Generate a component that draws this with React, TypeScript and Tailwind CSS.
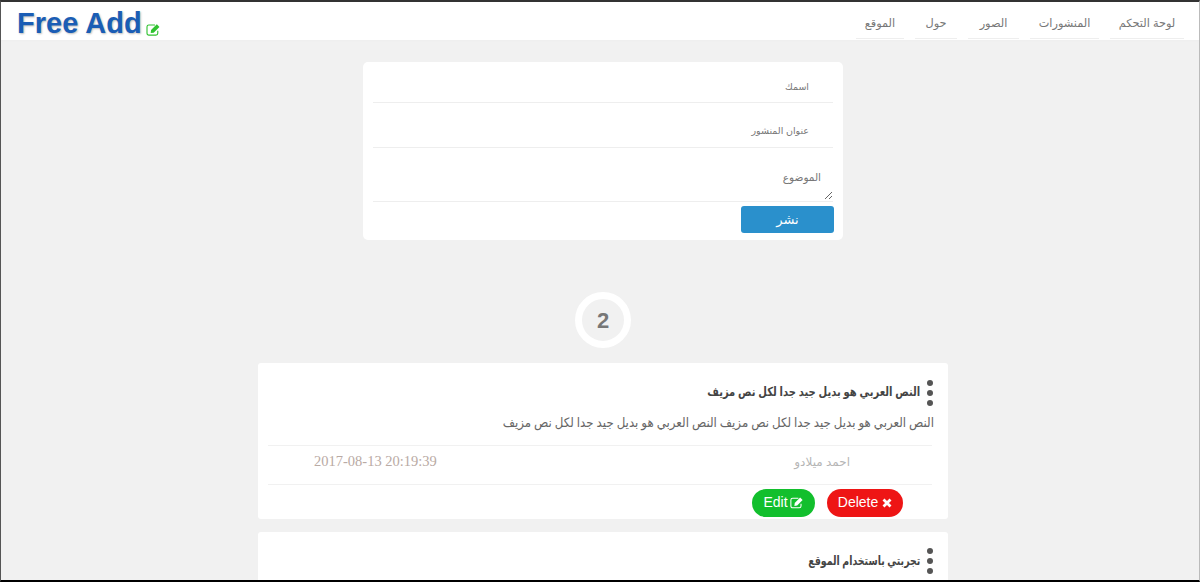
import React from "react";

const sans = "[font-family:'Liberation_Sans','DejaVu_Sans',sans-serif]";

function EditIcon({ className }: { className?: string }) {
  return (
    <svg viewBox="0 0 16 14" className={className} fill="none">
      <path d="M12.6 8.4V11C12.6 12.2 11.8 13 10.6 13H3C1.8 13 1 12.2 1 11V4C1 2.8 1.8 2.1 3 2.1H9.6" stroke="currentColor" strokeWidth="1.2" />
      <path d="M5.4 7.6L11.6 1.4L14.4 4.2L8.2 10.4L5 10.9Z" fill="currentColor" />
    </svg>
  );
}

function Kebab() {
  return (
    <div className="flex flex-col gap-[4px] w-[6px] -mr-px">
      <span className="w-[6px] h-[6px] rounded-full bg-[#555]" />
      <span className="w-[6px] h-[6px] rounded-full bg-[#555]" />
      <span className="w-[6px] h-[6px] rounded-full bg-[#555]" />
    </div>
  );
}

const links = [
  { label: "لوحة التحكم", width: "w-[74px]" },
  { label: "المنشورات", width: "w-[69px]" },
  { label: "الصور", width: "w-[51px]" },
  { label: "حول", width: "w-[42px]" },
  { label: "الموقع", width: "w-[48px]" },
];

export default function App() {
  return (
    <div className={`h-[582px] overflow-hidden bg-[#f1f1f1] border-t-2 border-l border-r border-b-2 border-t-[#333] border-l-[#555] border-r-[#bbb] border-b-black ${sans}`}>
      <header className="h-[38px] bg-white flex items-start justify-between pr-[15px] pl-[16px] shadow-[0_1px_2px_#eee]">
        <div className="flex items-start">
          <span className="pt-[2px] text-[29px] leading-[38px] font-bold text-[#1a5db5] [text-shadow:1px_1px_2px_#bbb]">Free Add</span>
          <EditIcon className="w-[15px] h-[13px] mt-[21px] ml-[4px] text-[#2fc22f]" />
        </div>
        <nav dir="rtl" className="flex gap-[11px] pt-[6px]">
          {links.map((l) => (
            <a key={l.label} className={`${l.width} h-[31px] text-center text-[11.3px] leading-[30px] text-[#777] border-b border-[#eee]`}>{l.label}</a>
          ))}
        </nav>
      </header>

      <main className="flex flex-col items-center pl-[6px]">
        <form dir="rtl" className="w-[480px] h-[178px] mt-[22px] bg-white rounded-[5px] px-[10px] flex flex-col">
          <div className="h-[41px] border-b border-[#eee] pr-[24px] pt-[17px] text-[9.5px] leading-[15px] text-[#777]">اسمك</div>
          <div className="h-[45px] border-b border-[#eee] pr-[24px] pt-[20px] text-[9.5px] leading-[15px] text-[#777]">عنوان المنشور</div>
          <div className="relative h-[54px] border-b border-[#eee] pr-[12px] pt-[22px] text-[10.5px] leading-[15px] text-[#777]">
            الموضوع
            <svg viewBox="0 0 9 9" className="absolute right-0 bottom-[1px] w-[9px] h-[9px] text-[#666]" fill="none" stroke="currentColor">
              <path d="M1 8L8 1M5 8L8 5" />
            </svg>
          </div>
          <button type="button" className="w-[93px] h-[27px] mt-[4px] -mr-px bg-[#2a90cc] rounded-[3px] text-white text-[13px]">نشر</button>
        </form>

        <div className="w-[56px] h-[56px] mt-[52px] rounded-full border-[7px] border-white flex items-center justify-center text-[22px] font-bold text-[#777]">2</div>

        <article className="w-[690px] h-[156px] mt-[15px] bg-white rounded-[3px] pl-[10px] pr-[16px]">
          <div dir="rtl" className="flex items-center gap-[7px] h-[47px] pt-[12px]">
            <Kebab />
            <h3 className="text-[12.5px] font-bold text-[#444] scale-x-80 origin-right">النص العربي هو بديل جيد جدا لكل نص مزيف</h3>
          </div>
          <p dir="rtl" className="h-[35px] -mr-[2px] text-[13px] leading-[26px] text-[#666] scale-x-91 origin-right [font-family:'Liberation_Serif','DejaVu_Sans',serif]">النص العربي هو بديل جيد جدا لكل نص مزيف النص العربي هو بديل جيد جدا لكل نص مزيف</p>
          <div className="flex h-[40px] items-center border-y border-[#f1f1f1] pb-[6px]">
            <div className="w-[336px] pl-[46px] text-[14.5px] text-[#b9aaa4] [font-family:'Liberation_Serif',serif]">2017-08-13 20:19:39</div>
            <div dir="rtl" className="flex-1 pr-[82px] text-[12px] text-[#b5b5b5]">احمد ميلادو</div>
          </div>
          <div className="flex items-center justify-end gap-[12px] pr-[29px] h-[34px] pt-[1px]">
            <button type="button" className="h-[28px] w-[63px] rounded-full bg-[#12bf2d] text-white text-[14px] flex items-center justify-center gap-[2px]">Edit<EditIcon className="w-[14px] h-[13px]" /></button>
            <button type="button" className="h-[28px] w-[76px] rounded-full bg-[#ee1515] text-white text-[14px] flex items-center justify-center gap-[4px]">Delete
              <svg viewBox="0 0 10 10" className="w-[10px] h-[10px]" fill="none" stroke="currentColor" strokeWidth="2.8"><path d="M1.5 1.5L8.5 8.5M8.5 1.5L1.5 8.5" /></svg>
            </button>
          </div>
        </article>

        <article className="w-[690px] h-[60px] mt-[13px] bg-white rounded-[3px] pl-[10px] pr-[16px]">
          <div dir="rtl" className="flex items-center gap-[7px] h-[47px] pt-[11px]">
            <Kebab />
            <h3 className="text-[12.5px] font-bold text-[#444] scale-x-75 origin-right">تجربتي باستخدام الموقع</h3>
          </div>
        </article>
      </main>
    </div>
  );
}
